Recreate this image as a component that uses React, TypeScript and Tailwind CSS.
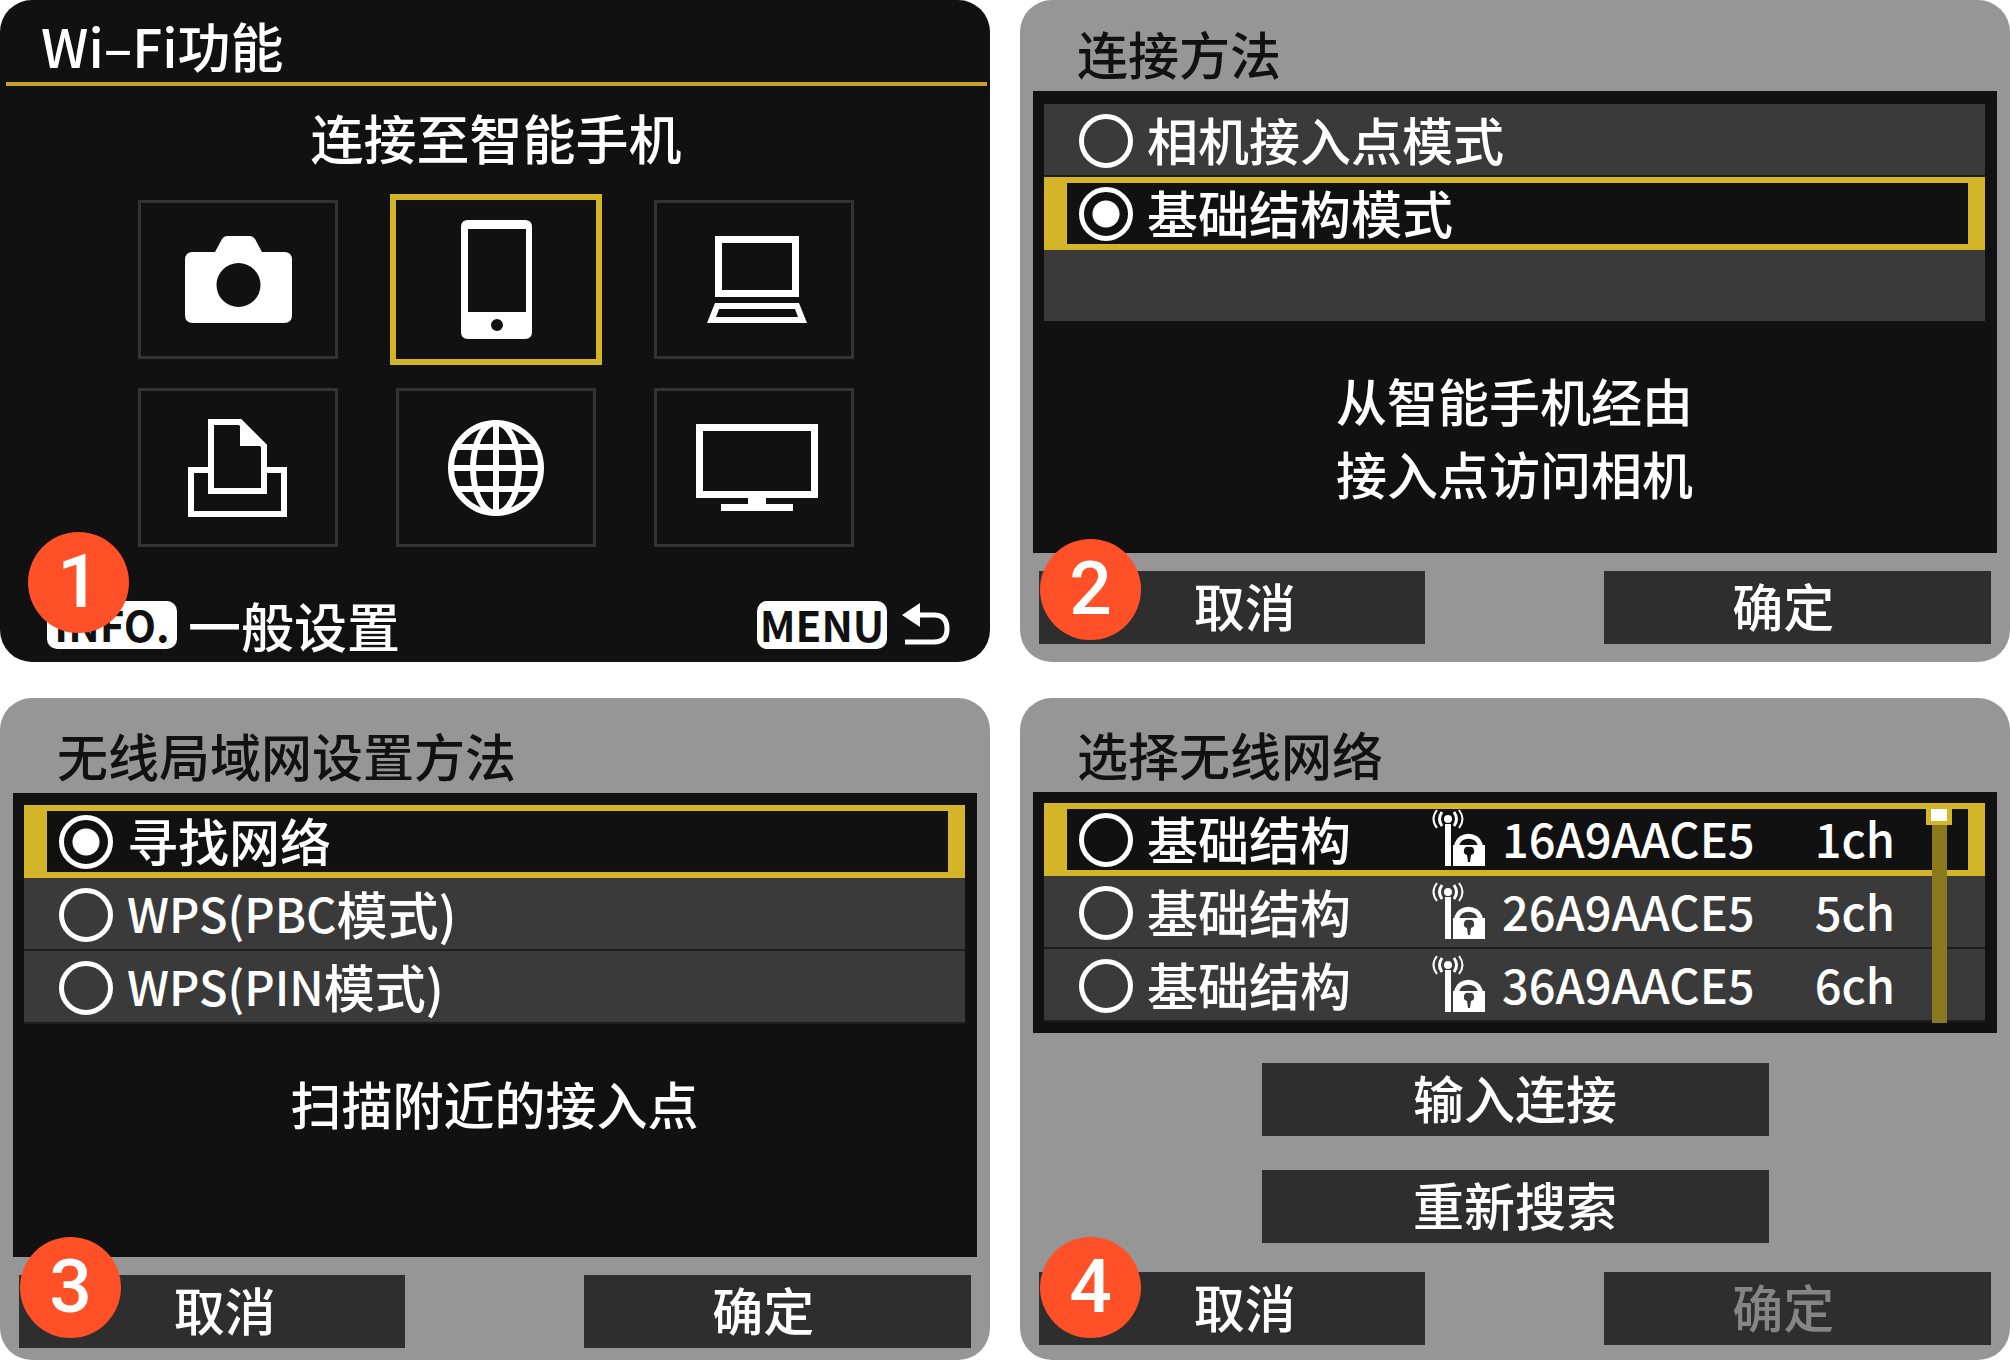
import type { ReactNode } from 'react'

const tileIcons = {
  camera: (
    <svg width="107" height="87" viewBox="0 0 107 87" fill="#fff">
      <path
        fillRule="evenodd"
        d="M30 16 L37 3 Q39 0 42 0 H65 Q68 0 70 3 L77 16 H99 Q107 16 107 24 V79 Q107 87 99 87 H8 Q0 87 0 79 V24 Q0 16 8 16 Z M53.5 27 A22 22 0 1 0 53.5 71 A22 22 0 1 0 53.5 27 Z"
      />
    </svg>
  ),
  phone: (
    <svg width="71" height="120" viewBox="0 0 71 120" fill="#fff">
      <path
        fillRule="evenodd"
        d="M7 0 H64 Q71 0 71 7 V112 Q71 119 64 119 H7 Q0 119 0 112 V7 Q0 0 7 0 Z M7 9 V92 H65 V9 Z M36 99 A6 6 0 1 0 36 111 A6 6 0 1 0 36 99 Z"
      />
    </svg>
  ),
  laptop: (
    <svg width="106" height="88" viewBox="-6 0 106 88" fill="#fff">
      <path fillRule="evenodd" d="M8 0 H92 V61 H8 Z M15 7 V54 H85 V7 Z" />
      <path fillRule="evenodd" d="M8 67 H92 L100 87 H0 Z M12 73 L9 81 H91 L88 73 Z" />
    </svg>
  ),
  printer: (
    <svg width="100" height="98" viewBox="0 0 100 98">
      <path d="M22 51 H3 V95 H96 V51 H78" fill="none" stroke="#fff" strokeWidth="6" />
      <path d="M23 3 H52 L76 27 V72 H23 Z" fill="none" stroke="#fff" strokeWidth="6" />
      <path d="M52 0 L79 27 H52 Z" fill="#fff" />
    </svg>
  ),
  globe: (
    <svg width="96" height="96" viewBox="0 0 96 96" fill="none" stroke="#fff" strokeWidth="6">
      <circle cx="48" cy="48" r="45" />
      <ellipse cx="48" cy="48" rx="23" ry="45" />
      <path d="M48 3 V93 M3 48 H93 M10 27 H86 M10 69 H86" />
    </svg>
  ),
  tv: (
    <svg width="128" height="87" viewBox="-6 0 128 87" fill="#fff">
      <path fillRule="evenodd" d="M0 0 H122 V74 H0 Z M7 7 V67 H115 V7 Z" />
      <path d="M52 74 H70 V80 H97 V87 H25 V80 H52 Z" />
    </svg>
  ),
}

const tiles = [
  { name: '相机', icon: tileIcons.camera },
  { name: '智能手机', icon: tileIcons.phone, active: true },
  { name: '电脑', icon: tileIcons.laptop },
  { name: '打印机', icon: tileIcons.printer },
  { name: '网络服务', icon: tileIcons.globe },
  { name: '电视', icon: tileIcons.tv },
]

const networks = [
  { ssid: '16A9AACE5', channel: '1ch', active: true },
  { ssid: '26A9AACE5', channel: '5ch' },
  { ssid: '36A9AACE5', channel: '6ch' },
]

function SecureSignal() {
  return (
    <svg className="shrink-0" width="54" height="58" viewBox="0 0 54 58">
      <circle cx="16" cy="10" r="4" fill="#fff" />
      <path d="M13 15 H19 V57 H13 Z" fill="#fff" />
      <g fill="none" stroke="#fff">
        <path strokeWidth="3" d="M10 3 Q5 10 10 17 M22 3 Q27 10 22 17" />
        <path strokeWidth="2" d="M5 1 Q-2 10 5 19 M27 1 Q34 10 27 19" />
      </g>
      <path d="M25 38 V35 A12 11 0 0 1 48 35 V38" fill="none" stroke="#fff" strokeWidth="5" />
      <path
        fillRule="evenodd"
        fill="#fff"
        d="M21 36 H53 V57 H21 Z M37 38 A4 4 0 0 0 35 46 L36 53 H38 L39 46 A4 4 0 0 0 37 38 Z"
      />
    </svg>
  )
}

function StepBadge({ step, className }: { step: number; className: string }) {
  return (
    <span
      className={`absolute flex size-[101px] items-center justify-center rounded-full bg-[#ff5028] pb-[2px] font-['Roboto',sans-serif] text-[75px] leading-none text-white ${className}`}
    >
      {step}
    </span>
  )
}

function Dialog({ title, step, className, children }: { title: string; step: number; className: string; children: ReactNode }) {
  return (
    <section className={`relative flex min-h-[662px] flex-col rounded-[32px] bg-[#969696] text-[51px] ${className}`}>
      <h2 className="pb-[3px] pl-[57px] leading-[70px] text-[#111]">{title}</h2>
      {children}
      <StepBadge step={step} className="bottom-[22px] left-5" />
    </section>
  )
}

function Option({ group, active, checked, children }: { group: string; active?: boolean; checked?: boolean; children?: ReactNode }) {
  return (
    <label
      className={`flex h-[73px] items-center gap-[14px] leading-[60px] ${
        active
          ? 'border-y-[6px] border-r-[17px] border-l-[23px] border-[#d4b52a] bg-[#111] pl-3'
          : 'border-b-2 border-[#1c1c1c] bg-[#3a3a3a] pt-[2px] pr-[17px] pl-[35px]'
      }`}
    >
      <input
        type="radio"
        name={group}
        defaultChecked={checked}
        className="size-[54px] shrink-0 appearance-none rounded-full border-[5px] border-white checked:bg-[radial-gradient(circle,#fff_13px,transparent_14px)]"
      />
      <span className="flex flex-1 items-center pb-1">{children}</span>
    </label>
  )
}

function Actions({ disabled }: { disabled?: boolean }) {
  return (
    <div className="mt-auto flex gap-[179px] px-[19px] leading-[69px]">
      <button className="h-[73px] flex-1 bg-[#2e2e2e] pb-1 pl-[26px]">取消</button>
      <button className="h-[73px] flex-1 bg-[#2e2e2e] pr-[28px] pb-1 disabled:text-[#858585]" disabled={disabled}>
        确定
      </button>
    </div>
  )
}

export default function App() {
  return (
    <main className="grid grid-cols-2 gap-x-[30px] gap-y-9 bg-white font-['Noto_Sans_CJK_SC',sans-serif] font-medium text-white">
      {/* Wi-Fi menu */}
      <section className="relative flex min-h-[662px] flex-col rounded-[32px] bg-[#111] text-[53px]">
        <h1 className="mr-[3px] ml-[6px] h-[86px] border-b-4 border-[#c4a428] pt-[7px] pl-[35px] leading-[76px]">Wi–Fi功能</h1>
        <h2 className="pt-[13px] pb-[1px] pl-[2px] text-center leading-[76px]">连接至智能手机</h2>
        <div className="mt-6 grid grid-cols-[repeat(3,200px)] justify-center gap-x-[58px] gap-y-[29px] pl-[2px]">
          {tiles.map((tile) => (
            <button
              key={tile.name}
              aria-label={tile.name}
              className={`flex items-center justify-center ${
                tile.active ? '-m-[6px] h-[171px] border-[6px] border-[#d4b52a]' : 'h-[159px] border-[3px] border-[#333]'
              }`}
            >
              {tile.icon}
            </button>
          ))}
        </div>
        <footer className="mt-auto flex items-center pr-10 pb-1 pl-[47px] leading-[66px]">
          <button className="h-12 w-[130px] rounded-[10px] bg-white pb-[2px] text-[42px] leading-[46px] font-bold text-[#111]">INFO.</button>
          <span className="ml-[11px]">一般设置</span>
          <button className="ml-auto h-12 w-[130px] rounded-[10px] bg-white pb-[2px] text-[42px] leading-[46px] font-bold text-[#111]">
            MENU
          </button>
          <button className="ml-[15px]" aria-label="返回">
            <svg width="48" height="44" viewBox="0 0 48 44">
              <path d="M0 12 L18 0 V24 Z" fill="#fff" />
              <path d="M14 12 H32 Q45 12 45 26 Q45 39 32 39 H3" fill="none" stroke="#fff" strokeWidth="5" />
            </svg>
          </button>
        </footer>
        <StepBadge step={1} className="bottom-[29px] left-[28px]" />
      </section>

      {/* Connection method */}
      <Dialog title="连接方法" step={2} className="pt-[18px] pb-[18px]">
        <div className="mx-[13px] h-[462px] bg-[#111] pt-[13px] pr-3 pl-[11px]">
          <Option group="method">相机接入点模式</Option>
          <Option group="method" active checked>
            基础结构模式
          </Option>
          <div className="h-[71px] bg-[#3a3a3a]" />
          <p className="mt-[43px] text-center leading-[73px]">
            从智能手机经由
            <br />
            接入点访问相机
          </p>
        </div>
        <Actions />
      </Dialog>

      {/* WLAN setup */}
      <Dialog title="无线局域网设置方法" step={3} className="pt-[22px] pb-3">
        <div className="mx-[13px] h-[464px] bg-[#111] pt-3 pr-3 pl-[11px]">
          <Option group="setup" active checked>
            寻找网络
          </Option>
          <Option group="setup">
            <span className="text-[47px]">WPS(PBC</span>模式)
          </Option>
          <Option group="setup">
            <span className="text-[47px]">WPS(PIN</span>模式)
          </Option>
          <p className="mt-[43px] text-center leading-[73px]">扫描附近的接入点</p>
        </div>
        <Actions />
      </Dialog>

      {/* Network list */}
      <Dialog title="选择无线网络" step={4} className="pt-[21px] pb-[15px]">
        <div className="relative mx-[13px] bg-[#111] py-[11px] pr-3 pl-[11px]">
          {networks.map((network) => (
            <Option key={network.ssid} group="network" active={network.active}>
              <span className="w-[285px]">基础结构</span>
              <SecureSignal />
              <span className="ml-4 text-[47px]">{network.ssid}</span>
              <span className="mr-[73px] ml-auto text-[47px]">{network.channel}</span>
            </Option>
          ))}
          <div className="absolute top-[15px] right-[45px] flex h-[216px] w-[26px] flex-col items-center">
            <div className="h-[18px] w-full bg-[#d4b52a] px-[5px] pt-[2px]">
              <div className="h-3 bg-white" />
            </div>
            <div className="w-[15px] flex-1 bg-[#8a781e]" />
          </div>
        </div>
        <div className="mt-[30px] flex flex-col items-center gap-[34px] leading-[69px]">
          <button className="h-[73px] w-[507px] bg-[#2e2e2e] pb-1">输入连接</button>
          <button className="h-[73px] w-[507px] bg-[#2e2e2e] pb-1">重新搜索</button>
        </div>
        <Actions disabled />
      </Dialog>
    </main>
  )
}
